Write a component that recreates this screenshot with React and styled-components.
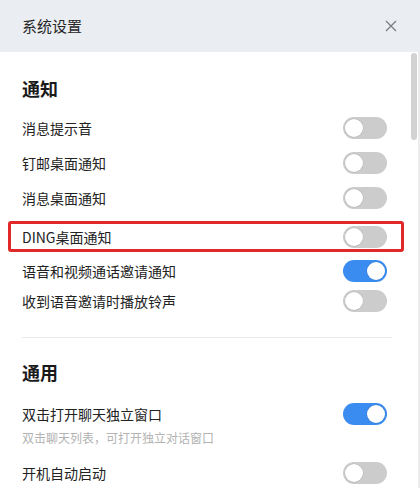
import React, { useState } from "react";
import styled, { createGlobalStyle } from "styled-components";

const GlobalStyle = createGlobalStyle`
  html, body {
    margin: 0;
    padding: 0;
    background: #ffffff;
  }
  body {
    font-family: "Noto Sans CJK SC", "Noto Sans", sans-serif;
    color: #1f1f1f;
  }
  * {
    box-sizing: border-box;
  }
`;

const notifyItems = [
  { id: "sound", label: "消息提示音", on: false },
  { id: "mail", label: "钉邮桌面通知", on: false },
  { id: "desktop", label: "消息桌面通知", on: false },
  { id: "ding", label: "DING桌面通知", on: false, highlight: true },
  { id: "call", label: "语音和视频通话邀请通知", on: true },
  { id: "ring", label: "收到语音邀请时播放铃声", on: false, height: 25 },
];

const Toggle = ({ on, onChange }) => (
  <Switch type="button" $on={on} onClick={onChange} aria-pressed={on}>
    <Knob $on={on} />
  </Switch>
);

const App = () => {
  const [state, setState] = useState(() => {
    const s = {};
    notifyItems.forEach((i) => (s[i.id] = i.on));
    s.window = true;
    s.boot = false;
    return s;
  });
  const flip = (id) => setState((prev) => ({ ...prev, [id]: !prev[id] }));

  return (
    <>
      <GlobalStyle />
      <Page>
        <Header>
          <Title>系统设置</Title>
          <CloseButton type="button" aria-label="关闭">
            <svg width="12" height="12" viewBox="0 0 12 12">
              <path d="M1 1 L11 11 M11 1 L1 11" stroke="#7a7a7a" strokeWidth="1.2" fill="none" />
            </svg>
          </CloseButton>
        </Header>
        <Body>
          <Content>
            <SectionTitle>通知</SectionTitle>
            {notifyItems.map((item) => {
              const row = (
                <Row key={item.id} $height={item.highlight ? 25 : item.height}>
                  <Label>{item.label}</Label>
                  <Toggle on={state[item.id]} onChange={() => flip(item.id)} />
                </Row>
              );
              return item.highlight ? (
                <Highlight key={item.id}>{row}</Highlight>
              ) : (
                row
              );
            })}
            <Divider />
            <SectionTitle $top={22}>通用</SectionTitle>
            <Group>
              <Row $height={30}>
                <Label>双击打开聊天独立窗口</Label>
                <Toggle on={state.window} onChange={() => flip("window")} />
              </Row>
              <Desc>双击聊天列表，可打开独立对话窗口</Desc>
            </Group>
            <Row $top={8}>
              <Label>开机自动启动</Label>
              <Toggle on={state.boot} onChange={() => flip("boot")} />
            </Row>
          </Content>
          <ScrollTrack>
            <ScrollThumb />
          </ScrollTrack>
        </Body>
      </Page>
    </>
  );
};

const Page = styled.div`
  width: 420px;
  height: 488px;
  overflow: hidden;
  display: flex;
  flex-direction: column;
  background: #fff;
`;

const Header = styled.div`
  height: 52px;
  flex: none;
  background: #eaedf2;
  display: flex;
  align-items: center;
  justify-content: space-between;
  padding: 0 23px 0 22px;
`;

const Title = styled.div`
  font-size: 15px;
  line-height: 20px;
  color: #262626;
`;

const CloseButton = styled.button`
  border: none;
  background: transparent;
  padding: 0;
  width: 12px;
  height: 12px;
  display: flex;
  cursor: pointer;
`;

const Body = styled.div`
  flex: 1;
  display: flex;
  min-height: 0;
`;

const Content = styled.div`
  flex: 1;
  padding: 24px 24px 0 22px;
  display: flex;
  flex-direction: column;
`;

const SectionTitle = styled.div`
  font-size: 18px;
  font-weight: 700;
  line-height: 24px;
  color: #1a1a1a;
  margin-top: ${(p) => (p.$top ? `${p.$top}px` : "0")};
  margin-bottom: 10px;
  flex: none;
`;

const Row = styled.div`
  height: ${(p) => (p.$height ? p.$height : 35)}px;
  margin-top: ${(p) => (p.$top ? `${p.$top}px` : "0")};
  display: flex;
  align-items: center;
  justify-content: space-between;
  flex: none;
`;

const Label = styled.span`
  font-size: 14px;
  color: #222;
`;

const Highlight = styled.div`
  margin: 6px -17px 1px -14px;
  padding: 0 14px 0 11px;
  border: 3px solid #e0282a;
  border-radius: 3px;
  flex: none;
`;

const Switch = styled.button`
  position: relative;
  width: 44px;
  height: 22px;
  border: none;
  padding: 0;
  border-radius: 11px;
  background: ${(p) => (p.$on ? "#3a8cf0" : "#cccccc")};
  cursor: pointer;
  flex: none;
`;

const Knob = styled.span`
  position: absolute;
  top: 2px;
  left: ${(p) => (p.$on ? "24px" : "2px")};
  width: 18px;
  height: 18px;
  border-radius: 50%;
  background: #fff;
  box-shadow: 0 0 0 0.5px rgba(0, 0, 0, 0.12);
`;

const Divider = styled.div`
  height: 1px;
  background: #ebebeb;
  margin: 24px -5px 0 0;
  flex: none;
`;

const Group = styled.div`
  margin-top: 5px;
  display: flex;
  flex-direction: column;
  flex: none;
`;

const Desc = styled.div`
  font-size: 12px;
  line-height: 18px;
  color: #b3b3b3;
`;

const ScrollTrack = styled.div`
  width: 9px;
  flex: none;
  border-right: 2px solid #ececec;
  padding-top: 1px;
`;

const ScrollThumb = styled.div`
  width: 6px;
  height: 87px;
  border-radius: 3px;
  background: #d2d2d2;
`;

export default App;
